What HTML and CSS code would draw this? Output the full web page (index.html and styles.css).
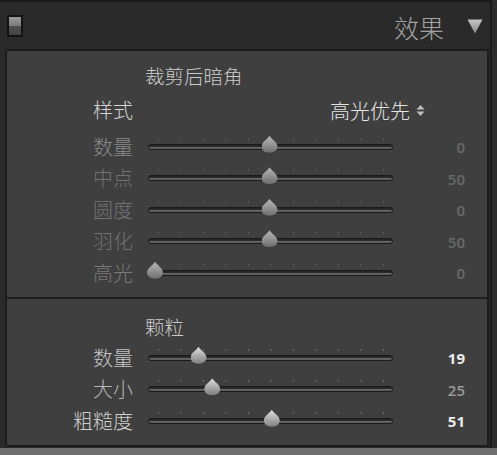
FILE: index.html
```html
<!DOCTYPE html>
<html lang="zh">
<head>
<meta charset="utf-8">
<title>效果</title>
<link rel="stylesheet" href="styles.css">
</head>
<body>
<div class="frame">
  <header class="hdr">
    <span class="toggle"></span>
    <span class="hdr-title">效果</span>
    <svg class="hdr-tri" width="16" height="15" viewBox="0 0 16 15">
      <defs><linearGradient id="tg" x1="0" y1="0" x2="0" y2="1"><stop offset="0" stop-color="#c4c4c4"/><stop offset="1" stop-color="#8c8c8c"/></linearGradient></defs>
      <path d="M0.5 0.5 H15.5 L8 14.5 Z" fill="url(#tg)"/>
    </svg>
  </header>
  <main class="panel">
    <section class="sec sec-vignette">
      <div class="sec-title">裁剪后暗角</div>
      <div class="style-row">
        <span class="label label-on">样式</span>
        <span class="select">高光优先
          <svg class="updown" width="9" height="13" viewBox="0 0 9 13"><path d="M4.5 1 L8.5 5.5 H0.5 Z M4.5 12 L8.5 7.5 H0.5 Z" fill="#bdbdbd"/></svg>
        </span>
      </div>
      <div class="rows">
        <div class="row off"><span class="label lab-1">数量</span><div class="track"><span class="thumb" style="--v:0.5"></span></div><span class="val">0</span></div>
        <div class="row off"><span class="label">中点</span><div class="track"><span class="thumb" style="--v:0.5"></span></div><span class="val">50</span></div>
        <div class="row off"><span class="label">圆度</span><div class="track"><span class="thumb" style="--v:0.5"></span></div><span class="val">0</span></div>
        <div class="row off"><span class="label">羽化</span><div class="track"><span class="thumb" style="--v:0.5"></span></div><span class="val">50</span></div>
        <div class="row off"><span class="label lab-5">高光</span><div class="track"><span class="thumb" style="--v:0"></span></div><span class="val">0</span></div>
      </div>
    </section>
    <section class="sec sec-grain">
      <div class="sec-title">颗粒</div>
      <div class="rows">
        <div class="row on"><span class="label g1">数量</span><div class="track"><span class="thumb" style="--v:0.19"></span></div><span class="val strong">19</span></div>
        <div class="row on"><span class="label g2">大小</span><div class="track"><span class="thumb" style="--v:0.25"></span></div><span class="val dim">25</span></div>
        <div class="row on"><span class="label g3">粗糙度</span><div class="track"><span class="thumb" style="--v:0.51"></span></div><span class="val strong">51</span></div>
      </div>
    </section>
  </main>
</div>
<div class="next"></div>
</body>
</html>
```
FILE: styles.css
```css
html, body {
  margin: 0;
  padding: 0;
}
body {
  width: 497px;
  height: 455px;
  overflow: hidden;
  background: #2c2c2c;
  font-family: "Noto Sans CJK SC", "Noto Sans", sans-serif;
}
.frame {
  width: 490px;
  border-top: 2px solid #1a1a1a;
  border-right: 2px solid #1a1a1a;
  background: #2a2a2a;
  padding-bottom: 1px;
}
.hdr {
  height: 47px;
  display: flex;
  align-items: center;
  padding: 0 7px;
}
.toggle {
  width: 12px;
  height: 18px;
  border: 2px solid #121212;
  background: linear-gradient(#9a9a9a 0, #7c7c7c 50%, #4e4e4e 50%, #444 100%);
  margin-top: 1px;
}
.hdr-title {
  margin-left: auto;
  font-size: 25px;
  line-height: 30px;
  font-weight: 300;
  color: #a2a2a2;
  margin-top: 2px;
}
.hdr-tri {
  margin-left: 23px;
  margin-top: 2px;
}
.panel {
  display: block;
  margin-left: 5px;
  width: 480px;
  border: 2px solid #1c1c1c;
  background: #3f3f3f;
}
.sec-vignette {
  padding: 13px 0 8.5px;
}
.sec-grain {
  border-top: 2px solid #1e1e1e;
  padding: 16px 0 8.5px;
}
.sec-title {
  height: 24px;
  line-height: 24px;
  font-size: 19.5px;
  font-weight: 300;
  color: #cbcbcb;
  padding-left: 138px;
}
.style-row {
  margin-top: 6px;
  height: 32px;
  display: grid;
  grid-template-columns: 126px 15px 1fr;
  align-items: center;
}
.style-row .label {
  grid-column: 1;
}
.select {
  grid-column: 3;
  justify-self: end;
  margin-right: 62px;
  display: flex;
  align-items: center;
  gap: 6px;
  font-size: 20px;
  font-weight: 300;
  color: #e4e4e4;
}
.updown {
  margin-top: 1px;
}
.rows {
  margin-top: 5px;
}
.sec-grain .rows {
  margin-top: 3px;
}
.row {
  height: 31.5px;
  display: grid;
  grid-template-columns: 126px 258px 74px;
  align-items: center;
}
.row .track {
  margin-left: 15px;
  width: 243px;
}
.label {
  text-align: right;
  font-size: 20px;
  line-height: 24px;
  font-weight: 300;
  color: #d0d0d0;
  white-space: nowrap;
}
.label-on {
  color: #d4d4d4;
}
.off .label {
  color: #727272;
}
.off .lab-1 {
  color: #8a8a8a;
}
.off .lab-5 {
  color: #7a7a7a;
}
.g1 { color: #c6c6c6; }
.g2 { color: #b6b6b6; }
.g3 { color: #cfcfcf; }
.track {
  position: relative;
  height: 4px;
  border: 1px solid #1a1a1a;
  border-radius: 4px;
  background: linear-gradient(#262626 0, #262626 35%, #666 60%, #5a5a5a 100%);
  box-sizing: content-box;
}
.track::before {
  content: "";
  position: absolute;
  left: 9px;
  width: 227px;
  top: -7px;
  height: 2px;
  background: linear-gradient(to right, #6c6c6c 0, #6c6c6c 1px, transparent 1px) 0 0 / 22.5px 2px repeat-x;
}
.off .track::before {
  background: linear-gradient(to right, #5e5e5e 0, #5e5e5e 1px, transparent 1px) 0 0 / 22.5px 2px repeat-x;
}
.thumb {
  position: absolute;
  top: -9px;
  left: calc(6px + var(--v) * (100% - 14px) - 8px);
  width: 16px;
  height: 17px;
  background: linear-gradient(#e0e0e0, #a4a4a4 60%, #808080);
  clip-path: path("M8 0 C9.8 3.4 16 6.2 16 10.8 C16 14.6 12.4 17 8 17 C3.6 17 0 14.6 0 10.8 C0 6.2 6.2 3.4 8 0 Z");
}
.off .thumb {
  background: linear-gradient(#b8b8b8, #8c8c8c 60%, #6c6c6c);
}
.val {
  text-align: right;
  font-family: "Open Sans", "Liberation Sans", sans-serif;
  font-size: 15px;
  font-weight: 600;
  color: #6a6a6a;
  padding-top: 1px;
}
.val.strong {
  color: #ececec;
  font-weight: 700;
}
.val.dim {
  color: #9a9a9a;
}
.next {
  height: 8px;
  background: #707070;
}
```
